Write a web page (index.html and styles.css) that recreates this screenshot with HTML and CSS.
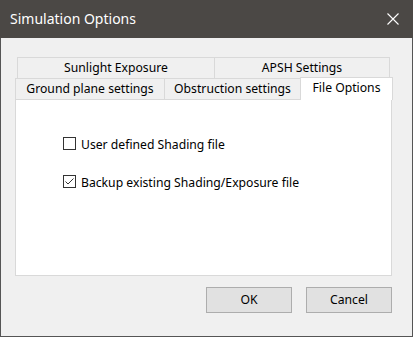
FILE: index.html
```html
<!DOCTYPE html>
<html>
<head>
<meta charset="utf-8">
<link rel="stylesheet" href="styles.css">
</head>
<body>
<div class="window">
  <div class="titlebar">
    <span class="title">Simulation Options</span>
    <svg class="close" width="12" height="12" viewBox="0 0 12 12"><path d="M0.5 0.5 L11.5 11.5 M11.5 0.5 L0.5 11.5" stroke="#ffffff" stroke-width="1.1" fill="none"/></svg>
  </div>
  <div class="client">
    <div class="tabs">
      <div class="row row1">
        <div class="tab tab-sun">Sunlight Exposure</div>
        <div class="tab tab-apsh">APSH Settings</div>
      </div>
      <div class="row row2">
        <div class="tab tab-ground">Ground plane settings</div>
        <div class="tab tab-obst">Obstruction settings</div>
        <div class="tab tab-file selected">File Options</div>
      </div>
      <div class="panel">
        <label class="check">
          <span class="box"></span>
          <span class="label">User defined Shading file</span>
        </label>
        <label class="check">
          <span class="box"><svg width="11" height="11" viewBox="0 0 11 11"><path d="M1.5 5.5 L4 8 L9.5 2.5" stroke="#333" stroke-width="1" fill="none"/></svg></span>
          <span class="label">Backup existing Shading/Exposure file</span>
        </label>
      </div>
    </div>
    <div class="buttons">
      <div class="btn">OK</div>
      <div class="btn">Cancel</div>
    </div>
  </div>
</div>
</body>
</html>
```
FILE: styles.css
```css
html, body {
  margin: 0;
  padding: 0;
  background: #f0f0f0;
}
.window {
  width: 413px;
  height: 337px;
  box-sizing: border-box;
  border: 1px solid #555555;
  border-top: none;
  background: #f0f0f0;
  font-family: "Noto Sans", sans-serif;
  font-size: 12.2px;
  color: #000;
  display: flex;
  flex-direction: column;
}
.titlebar {
  height: 38px;
  background: #4b4845;
  display: flex;
  align-items: center;
  justify-content: space-between;
  padding: 0 14px 0 10px;
  margin: 0 -1px;
}
.title {
  color: #ffffff;
  font-size: 14px;
  line-height: 20px;
  margin-top: 0;
}
.close {
  display: block;
}
.client {
  flex: 1;
  display: flex;
  flex-direction: column;
  padding: 19px 0 0 14px;
}
.tabs {
  display: flex;
  flex-direction: column;
}
.row {
  display: flex;
  height: 21px;
  align-items: flex-start;
}
.row1 {
  margin-left: 2px;
}
.tab {
  box-sizing: border-box;
  height: 21px;
  border: 1px solid #d9d9d9;
  border-bottom: none;
  margin-right: -1px;
  text-align: center;
  line-height: 20px;
  white-space: nowrap;
  background: #f0f0f0;
}
.tab-sun { width: 198px; }
.tab-apsh { width: 176px; }
.tab-ground { width: 150px; }
.tab-obst { width: 137px; }
.tab-file { width: 93px; }
.tab.selected {
  height: 23px;
  margin-top: -1px;
  background: #ffffff;
  position: relative;
  z-index: 1;
  line-height: 20px;
}
.panel {
  box-sizing: border-box;
  width: 377px;
  height: 177px;
  background: #ffffff;
  border: 1px solid #d9d9d9;
  padding: 37px 0 0 47px;
  display: flex;
  flex-direction: column;
  gap: 25px;
}
.check {
  display: flex;
  align-items: center;
  height: 13px;
}
.box {
  box-sizing: border-box;
  width: 13px;
  height: 13px;
  border: 1px solid #333333;
  background: #fff;
  display: flex;
  align-items: center;
  justify-content: center;
}
.box svg { display: block; }
.label {
  margin-left: 5px;
  line-height: 13px;
  margin-top: 2px;
}
.buttons {
  display: flex;
  justify-content: flex-end;
  gap: 14px;
  margin-top: 11px;
  padding-right: 20px;
}
.btn {
  box-sizing: border-box;
  width: 86px;
  height: 26px;
  background: #e1e1e1;
  border: 1px solid #adadad;
  text-align: center;
  line-height: 23px;
}
```
